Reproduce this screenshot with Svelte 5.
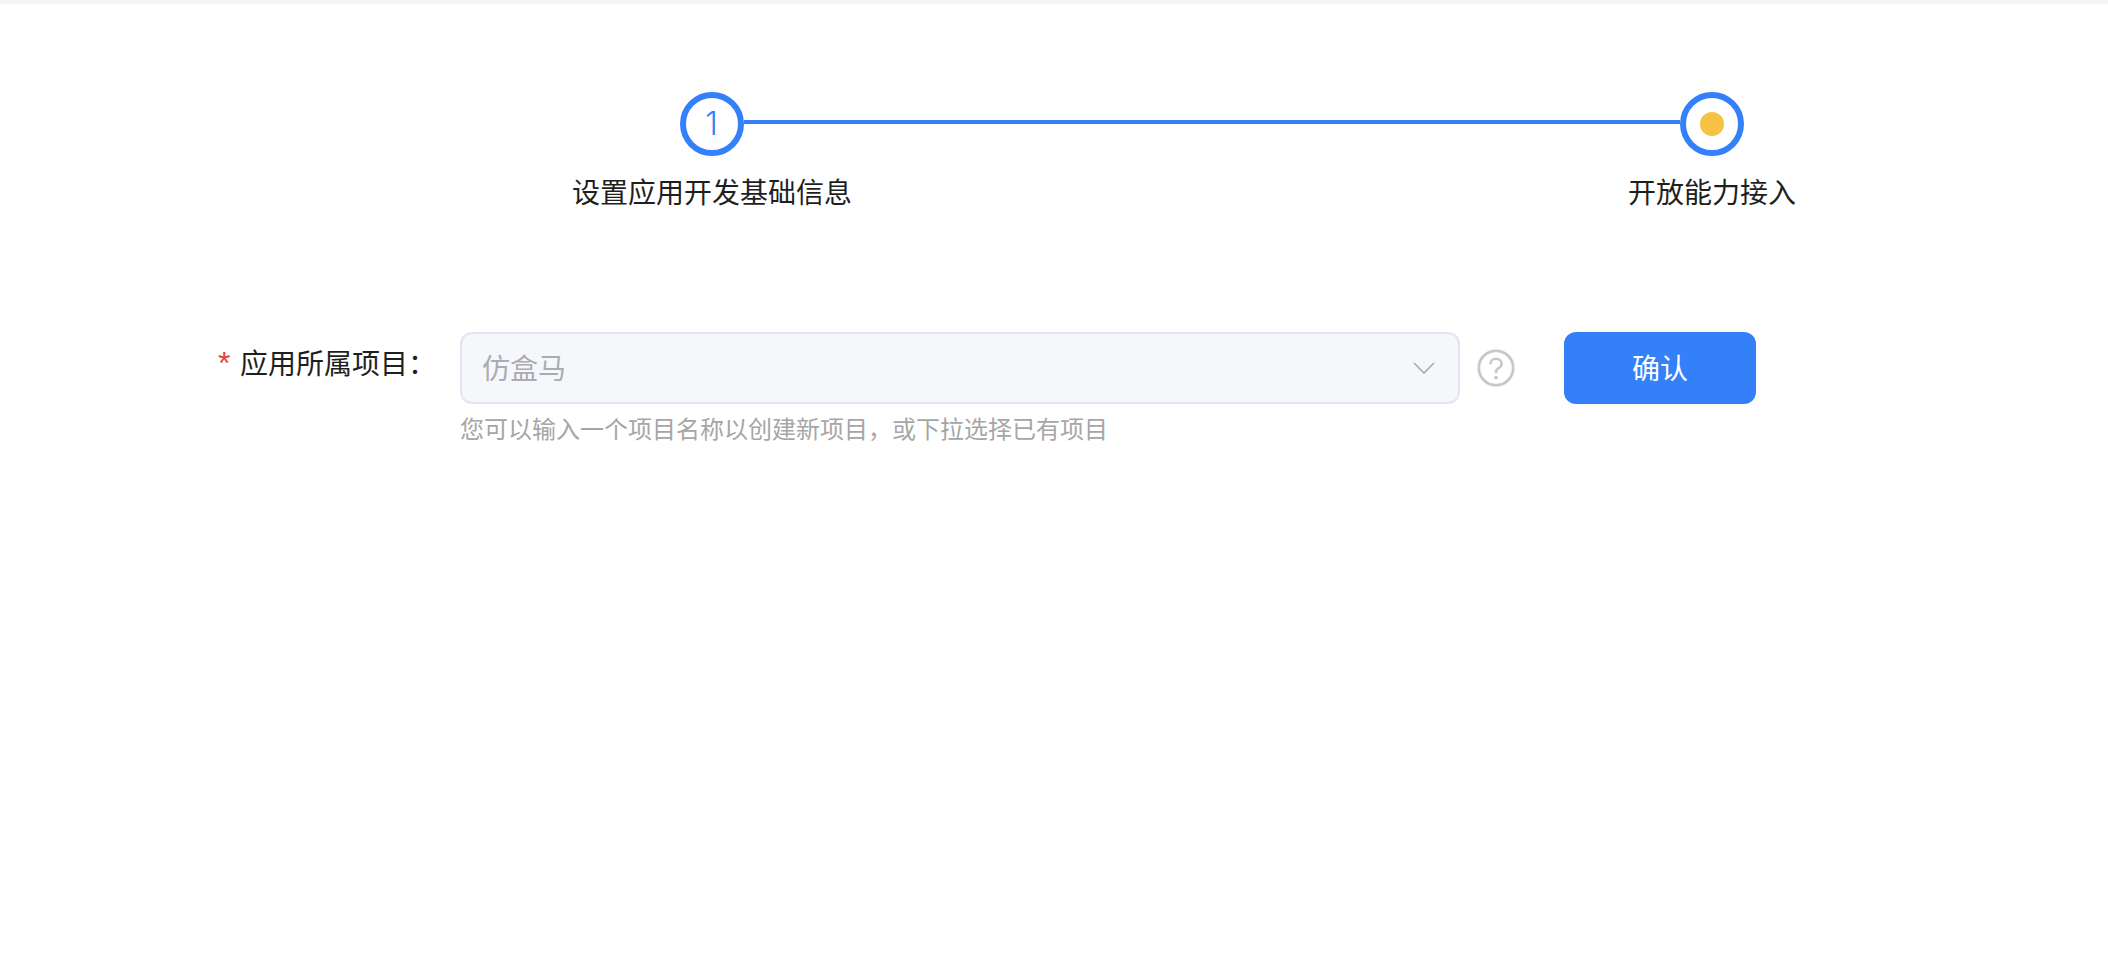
<script>
  const steps = ["设置应用开发基础信息", "开放能力接入"];
</script>

<svelte:head>
  <title>开放能力接入</title>
</svelte:head>

<div class="page">
  <div class="steps">
    <div class="track">
      <div class="circle"><span class="num">1</span></div>
      <div class="line"></div>
      <div class="circle"><span class="dot"></span></div>
    </div>
    <div class="labels">
      {#each steps as step}
        <div class="label">{step}</div>
      {/each}
    </div>
  </div>

  <div class="form">
    <div class="form-label"><span class="req">*</span>应用所属项目：</div>
    <div class="field">
      <div class="select">
        <span>仿盒马</span>
        <svg class="chevron" width="22" height="12" viewBox="0 0 22 12" fill="none">
          <path d="M1 1l10 10L21 1" stroke="#a9abb2" stroke-width="1.6" />
        </svg>
      </div>
      <div class="hint">您可以输入一个项目名称以创建新项目，或下拉选择已有项目</div>
    </div>
    <svg class="help" width="38" height="38" viewBox="0 0 38 38" fill="none">
      <circle cx="19" cy="19" r="17.2" stroke="#c8c8c8" stroke-width="2.8" />
      <path d="M13.4 15.2c0-3.2 2.5-5.4 5.6-5.4s5.6 2.1 5.6 5c0 2-1 3.1-2.9 4.4-1.8 1.1-2.7 2-2.7 4v1" stroke="#c8c8c8" stroke-width="2.6" />
      <circle cx="19" cy="28.6" r="1.9" fill="#c8c8c8" />
    </svg>
    <button class="confirm">确认</button>
  </div>
</div>

<style>
  :global(body) {
    background: #fff;
  }

  .page {
    min-height: 964px;
    border-top: 4px solid #f5f5f5;
    box-sizing: border-box;
    font-family: "Noto Sans CJK SC", "Noto Sans", sans-serif;
    color: #1f1f1f;
  }

  .steps {
    width: 1300px;
    margin-left: 562px;
    padding-top: 88px;
  }

  .track {
    display: flex;
    align-items: center;
    margin: 0 118px;
  }

  .circle {
    width: 64px;
    height: 64px;
    flex: none;
    box-sizing: border-box;
    border: 6px solid #3380f8;
    border-radius: 50%;
    display: flex;
    align-items: center;
    justify-content: center;
  }

  .num {
    font-family: Inter, sans-serif;
    font-size: 32px;
    line-height: 1;
    color: #3380f8;
    font-weight: 300;
    margin-right: 1px;
  }

  .dot {
    width: 24px;
    height: 24px;
    border-radius: 50%;
    background: #f7c143;
  }

  .line {
    flex: 1;
    height: 4px;
    margin-bottom: 4px;
    background: #3380f8;
  }

  .labels {
    display: flex;
    justify-content: space-between;
    margin-top: 15px;
  }

  .label {
    width: 300px;
    text-align: center;
    font-size: 28px;
    line-height: 40px;
  }

  .form {
    display: flex;
    align-items: flex-start;
    margin-top: 121px;
    margin-left: 218px;
  }

  .form-label {
    width: 242px;
    flex: none;
    font-size: 28px;
    line-height: 60px;
  }

  .req {
    display: inline-block;
    width: 22px;
    font-family: "Liberation Sans", sans-serif;
    font-size: 32px;
    line-height: 1;
    color: #e8403a;
  }

  .field {
    width: 1000px;
    flex: none;
  }

  .select {
    height: 72px;
    box-sizing: border-box;
    border: 2px solid #e4e6ef;
    border-radius: 12px;
    background: #f6f7fb;
    display: flex;
    align-items: center;
    justify-content: space-between;
    padding: 0 24px 3px 20px;
    font-size: 28px;
    color: #aaacb2;
  }

  .chevron {
    margin: 3px -1px 0 0;
  }

  .hint {
    margin-top: 4px;
    font-size: 24px;
    line-height: 40px;
    color: #a6a6a6;
  }

  .help {
    margin: 17px 0 0 17px;
    flex: none;
  }

  .confirm {
    margin-left: 49px;
    width: 192px;
    height: 72px;
    padding: 0 0 3px;
    border: none;
    border-radius: 12px;
    background: #3380f8;
    color: #fff;
    font-family: inherit;
    font-size: 28px;
    cursor: pointer;
  }
</style>
